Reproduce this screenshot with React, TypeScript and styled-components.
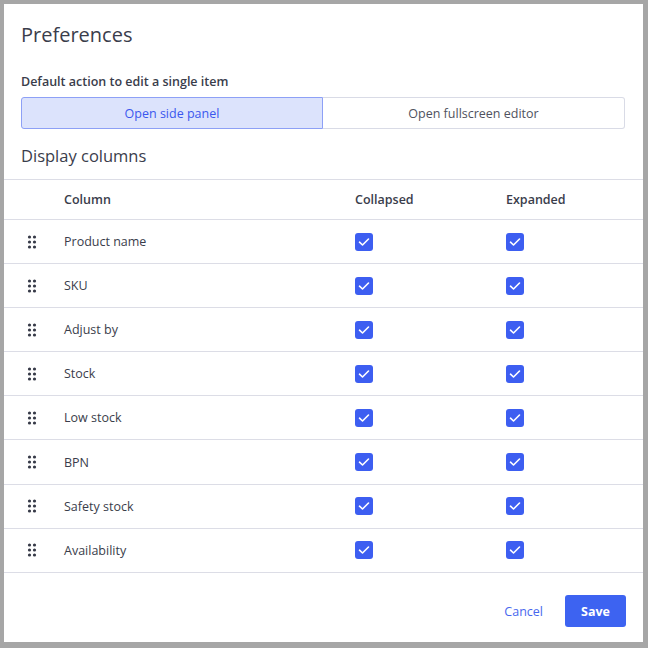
import React, { useState } from "react";
import styled, { createGlobalStyle } from "styled-components";

const Global = createGlobalStyle`
  html, body { margin: 0; padding: 0; background: #a6a6a6; }
  body { font-family: "Open Sans", "Noto Sans", sans-serif; color: #3a3d4b; }
  * { box-sizing: border-box; }
`;

const Backdrop = styled.div`
  width: 648px;
  height: 648px;
  padding: 4px 5px 6px 4px;
  background: #a6a6a6;
`;

const Dialog = styled.div`
  width: 639px;
  height: 638px;
  background: #fff;
  display: flex;
  flex-direction: column;
`;

const Head = styled.div`
  padding: 16px 18px 0 17px;
  display: flex;
  flex-direction: column;
`;

const Title = styled.h1`
  margin: 0;
  font-size: 20px;
  font-weight: 400;
  line-height: 30px;
  color: #3a3d4b;
`;

const Label = styled.div`
  margin-top: 22px;
  font-size: 12.5px;
  font-weight: 600;
  line-height: 20px;
`;

const Segmented = styled.div`
  margin-top: 5px;
  display: grid;
  grid-template-columns: 1fr 1fr;
  height: 32px;
`;

const Segment = styled.button<{ $active?: boolean; $side: "l" | "r" }>`
  font-family: inherit;
  font-size: 12.5px;
  cursor: pointer;
  background: ${(p) => (p.$active ? "#dce3fc" : "#fff")};
  color: ${(p) => (p.$active ? "#3a57ee" : "#50525e")};
  border: 1px solid ${(p) => (p.$active ? "#8da0f6" : "#d9dbe6")};
  border-radius: ${(p) => (p.$side === "l" ? "3px 0 0 3px" : "0 3px 3px 0")};
  ${(p) => (p.$side === "r" ? "border-left: none;" : "")}
`;

const Section = styled.div`
  margin-top: 15px;
  font-size: 16.5px;
  line-height: 24px;
  padding-bottom: 11px;
`;

const Table = styled.div`
  border-top: 1px solid #dcdde6;
  display: flex;
  flex-direction: column;
`;

const Row = styled.div<{ $header?: boolean }>`
  display: grid;
  grid-template-columns: 60px 291px 151px 1fr;
  align-items: center;
  height: ${(p) => (p.$header ? "40px" : "44.1px")};
  border-bottom: 1px solid #dcdde6;
  font-size: 12.5px;
  font-weight: ${(p) => (p.$header ? 600 : 400)};
`;

const Handle = styled.div`
  display: flex;
  padding-left: 23px;
`;

const Cell = styled.div`
  display: flex;
  align-items: center;
`;

const Check = styled.span`
  width: 18px;
  height: 18px;
  border-radius: 3px;
  background: #3d5ef1;
  display: inline-flex;
  align-items: center;
  justify-content: center;
`;

const Footer = styled.div`
  margin-top: auto;
  padding: 0 17px 15px 0;
  display: flex;
  justify-content: flex-end;
  align-items: center;
  gap: 22px;
`;

const Cancel = styled.button`
  border: none;
  background: none;
  font-family: inherit;
  font-size: 12.5px;
  color: #4868ee;
  padding: 0;
  cursor: pointer;
`;

const Save = styled.button`
  border: none;
  background: #3d63f1;
  color: #fff;
  font-family: inherit;
  font-size: 12.5px;
  font-weight: 700;
  width: 61px;
  height: 32px;
  border-radius: 3px;
  cursor: pointer;
`;

const Dots = () => (
  <svg width="10" height="14" viewBox="0 0 10 14">
    {[2, 7, 12].map((y) =>
      [2.5, 7.5].map((x) => <circle key={`${x}-${y}`} cx={x} cy={y} r="1.6" fill="#363947" />)
    )}
  </svg>
);

const Tick = () => (
  <Check>
    <svg width="12" height="10" viewBox="0 0 12 10">
      <path d="M1.5 5.2 L4.5 8 L10.5 2" stroke="#fff" strokeWidth="1.6" fill="none" strokeLinecap="round" strokeLinejoin="round" />
    </svg>
  </Check>
);

const columns = ["Product name", "SKU", "Adjust by", "Stock", "Low stock", "BPN", "Safety stock", "Availability"];

export default function App() {
  const [mode, setMode] = useState(0);
  return (
    <>
      <Global />
      <Backdrop>
        <Dialog>
          <Head>
            <Title>Preferences</Title>
            <Label>Default action to edit a single item</Label>
            <Segmented>
              <Segment $side="l" $active={mode === 0} onClick={() => setMode(0)}>Open side panel</Segment>
              <Segment $side="r" $active={mode === 1} onClick={() => setMode(1)}>Open fullscreen editor</Segment>
            </Segmented>
            <Section>Display columns</Section>
          </Head>
          <Table>
            <Row $header>
              <span />
              <Cell>Column</Cell>
              <Cell>Collapsed</Cell>
              <Cell>Expanded</Cell>
            </Row>
            {columns.map((c) => (
              <Row key={c}>
                <Handle><Dots /></Handle>
                <Cell>{c}</Cell>
                <Cell><Tick /></Cell>
                <Cell><Tick /></Cell>
              </Row>
            ))}
          </Table>
          <Footer>
            <Cancel>Cancel</Cancel>
            <Save>Save</Save>
          </Footer>
        </Dialog>
      </Backdrop>
    </>
  );
}
